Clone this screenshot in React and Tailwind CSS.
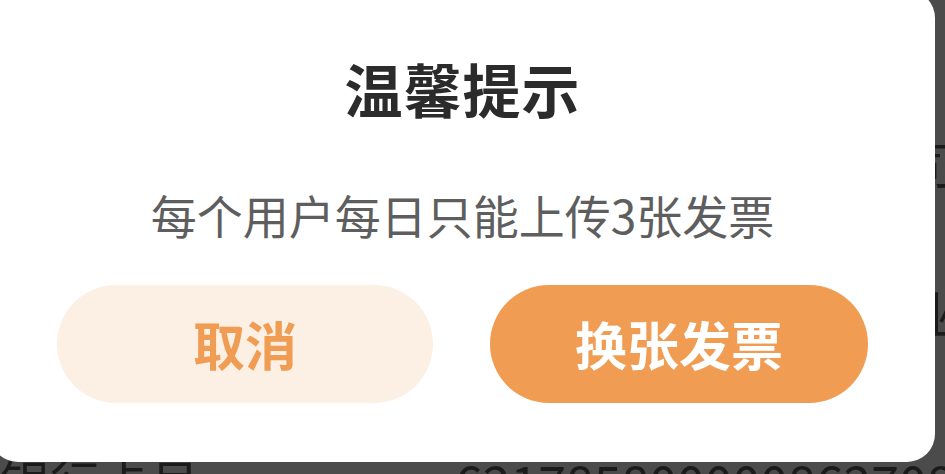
export default function App() {
  const font = { fontFamily: '"Noto Sans CJK SC", "Noto Sans", sans-serif' };
  return (
    <div
      className="relative w-[945px] h-[474px] overflow-hidden bg-[#4b4b4b]"
      style={font}
    >
      {/* dimmed page content behind the overlay */}
      <div className="flex flex-col text-[#1b1b1b] text-[50px] leading-none">
        <div className="flex h-[137px]" />
        <div className="flex h-[50px] items-center">
          <span className="w-[455px] pl-[20px] shrink-0">开户名称</span>
          <span className="whitespace-nowrap">上海某某科技有限公司有限</span>
        </div>
        <div className="flex h-[99px]" />
        <div className="flex h-[52px] items-center">
          <span className="w-[455px] pl-[20px] shrink-0">开户银行</span>
          <span className="whitespace-nowrap">中国银行上海分行营业部3</span>
        </div>
        <div className="flex h-[117px]" />
        <div className="flex h-[52px] items-center">
          <span className="w-[455px] shrink-0 whitespace-nowrap">银行卡号</span>
          <span className="whitespace-nowrap">6217858000008627084</span>
        </div>
      </div>

      {/* dialog */}
      <div className="absolute left-[-10px] top-[-10px] w-[945px] h-[472px] rounded-[28px] bg-white flex flex-col items-center">
        <div className="mt-[62px] h-[72px] flex items-center text-[58px] font-bold text-[#2b2b2b] leading-none tracking-[1px]">
          温馨提示
        </div>
        <div className="mt-[62px] h-[56px] flex items-center text-[46px] text-[#5e5e5e] leading-none">
          每个用户每日只能上传3张发票
        </div>
        <div className="mt-[43px] flex gap-[57px]">
          <button className="w-[376px] h-[118px] rounded-full bg-[#fcefe3] text-[#f09c52] text-[52px] font-bold leading-none flex items-center justify-center">
            取消
          </button>
          <button className="w-[378px] h-[118px] rounded-full bg-[#f09c52] text-white text-[52px] font-bold leading-none flex items-center justify-center">
            换张发票
          </button>
        </div>
      </div>
    </div>
  );
}
